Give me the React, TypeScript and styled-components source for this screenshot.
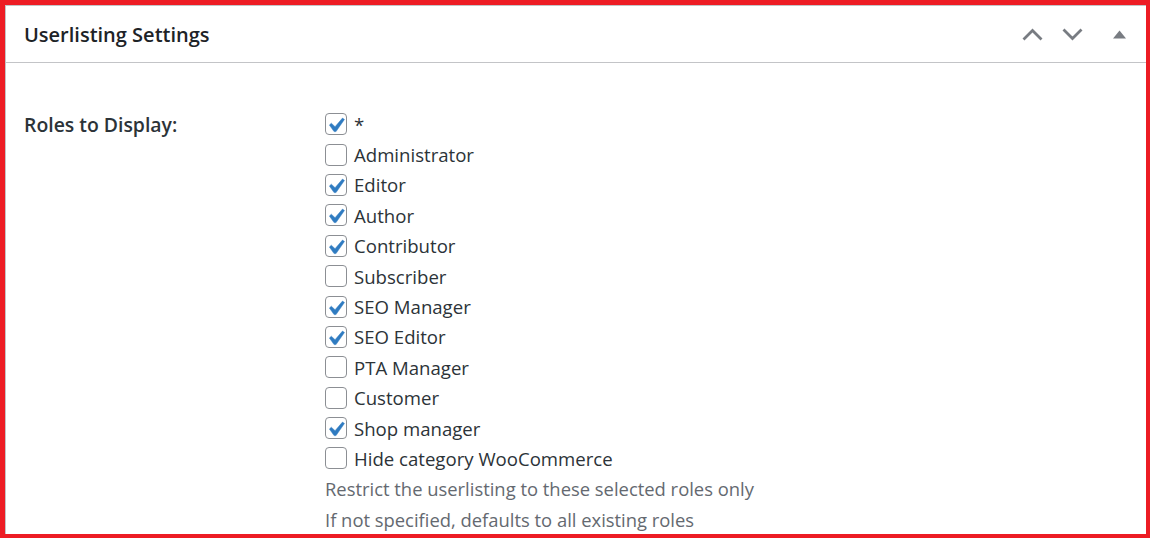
import React from 'react';
import styled, { createGlobalStyle } from 'styled-components';

const GlobalStyle = createGlobalStyle`
    html, body {
        margin: 0;
        padding: 0;
        background: #ffffff;
    }
    body {
        font-family: "Open Sans", "Noto Sans", sans-serif;
        color: #2c3338;
    }
`;

const Frame = styled.div`
    box-sizing: border-box;
    width: 1150px;
    height: 538px;
    border-style: solid;
    border-color: #ed1c24;
    border-width: 5px 4px 4px 5px;
    overflow: hidden;
`;

const Postbox = styled.div`
    height: 100%;
    border-left: 1px solid #c3c4c7;
    border-top: 1px solid #c3c4c7;
    background: #ffffff;
`;

const Header = styled.div`
    display: flex;
    align-items: center;
    height: 56px;
    padding: 0 20px 0 18px;
    border-bottom: 1px solid #c3c4c7;
`;

const Title = styled.h2`
    flex: 1;
    margin: 0;
    font-size: 20px;
    font-weight: 600;
    color: #1d2327;
`;

const Handles = styled.div`
    display: flex;
    align-items: center;
    gap: 19px;
    color: #787c82;
`;

const HandleButton = styled.span<{ gapBefore?: number }>`
    display: flex;
    margin-left: ${({ gapBefore }) => (gapBefore ? `${gapBefore}px` : '0')};
`;

const Body = styled.div`
    display: grid;
    grid-template-columns: 301px 1fr;
    padding: 46px 18px 0 18px;
`;

const Label = styled.div`
    height: 30px;
    display: flex;
    align-items: center;
    font-size: 19.4px;
    font-weight: 600;
    color: #2c3338;
`;

const Options = styled.div`
    display: flex;
    flex-direction: column;
`;

const OptionRow = styled.label`
    display: flex;
    align-items: center;
    height: 30.4px;
    gap: 7px;
    font-size: 18.6px;
    color: #2c3338;
`;

const Box = styled.span<{ checked: boolean }>`
    position: relative;
    box-sizing: border-box;
    width: 22px;
    height: 22px;
    border: 1px solid #8c8f94;
    border-radius: 4px;
    background: #ffffff;
    flex-shrink: 0;

    svg {
        position: absolute;
        left: -5px;
        top: -3px;
        display: ${({ checked }) => (checked ? 'block' : 'none')};
    }
`;

const Description = styled.div`
    height: 30.4px;
    display: flex;
    align-items: center;
    font-size: 18.4px;
    color: #646970;
`;

const roles: [string, boolean][] = [
    ['*', true],
    ['Administrator', false],
    ['Editor', true],
    ['Author', true],
    ['Contributor', true],
    ['Subscriber', false],
    ['SEO Manager', true],
    ['SEO Editor', true],
    ['PTA Manager', false],
    ['Customer', false],
    ['Shop manager', true],
    ['Hide category WooCommerce', false],
];

// WordPress admin checkbox tick
const Check = () => (
    <svg width="29" height="29" viewBox="0 0 20 20">
        <path
            d="M14.83 4.89l1.34.94-5.81 8.38H9.02L5.78 9.67l1.34-1.25 2.57 2.4z"
            fill="#2f7bc1"
            stroke="#2f7bc1"
            strokeWidth="0.35"
            strokeLinejoin="round"
        />
    </svg>
);

const App = () => (
    <>
        <GlobalStyle />
        <Frame>
            <Postbox>
                <Header>
                    <Title>Userlisting Settings</Title>
                    <Handles>
                        <HandleButton>
                            <svg width="21" height="13" viewBox="0 0 21 13">
                                <polyline points="1.5,11.5 10.5,2.5 19.5,11.5" fill="none" stroke="currentColor" strokeWidth="2.8" />
                            </svg>
                        </HandleButton>
                        <HandleButton>
                            <svg width="21" height="13" viewBox="0 0 21 13">
                                <polyline points="1.5,1.5 10.5,10.5 19.5,1.5" fill="none" stroke="currentColor" strokeWidth="2.8" />
                            </svg>
                        </HandleButton>
                        <HandleButton gapBefore={11}>
                            <svg width="13" height="9" viewBox="0 0 13 9">
                                <polygon points="0,8.5 6.5,0.5 13,8.5" fill="currentColor" />
                            </svg>
                        </HandleButton>
                    </Handles>
                </Header>
                <Body>
                    <Label>Roles to Display:</Label>
                    <Options>
                        {roles.map(([name, checked]) => (
                            <OptionRow key={name}>
                                <Box checked={checked}>
                                    <Check />
                                </Box>
                                {name}
                            </OptionRow>
                        ))}
                        <Description>Restrict the userlisting to these selected roles only</Description>
                        <Description>If not specified, defaults to all existing roles</Description>
                    </Options>
                </Body>
            </Postbox>
        </Frame>
    </>
);

export default App;
